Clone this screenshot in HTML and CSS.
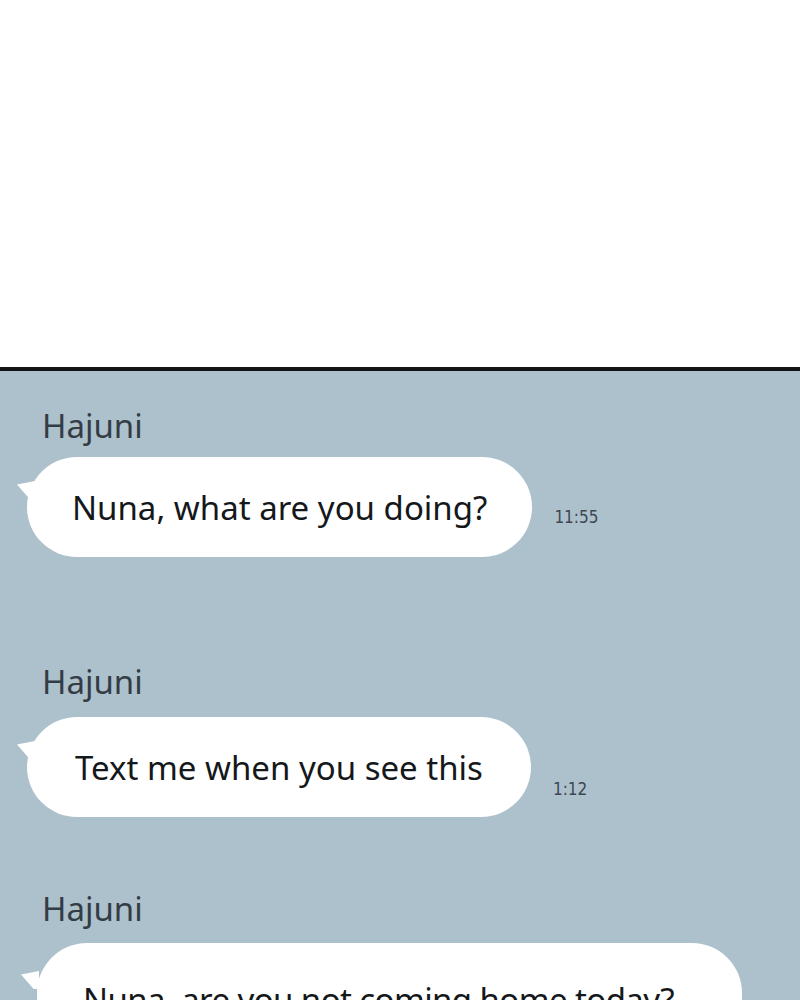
FILE: index.html
```html
<!DOCTYPE html>
<html lang="en">
<head>
    <meta charset="UTF-8">
    <meta name="viewport" content="width=device-width, initial-scale=1.0">
    <title>Chat</title>
    <link rel="stylesheet" href="styles.css">
</head>
<body>
    <div class="blank"></div>

    <div class="chat">
        <!-- first message -->
        <div class="message first">
            <div class="sender">Hajuni</div>
            <div class="row">
                <div class="bubble">Nuna, what are you doing?</div>
                <span class="time low">11:55</span>
            </div>
        </div>

        <!-- second message -->
        <div class="message second">
            <div class="sender">Hajuni</div>
            <div class="row">
                <div class="bubble wide-pad">Text me when you see this</div>
                <span class="time">1:12</span>
            </div>
        </div>

        <!-- third message -->
        <div class="message third">
            <div class="sender">Hajuni</div>
            <div class="row">
                <div class="bubble long">Nuna, are you not coming home today?</div>
            </div>
        </div>
    </div>
</body>
</html>
```

FILE: styles.css
```css
body {
    margin: 0;
    padding: 0;
    font-family: "Noto Sans", "Open Sans", sans-serif;
    background-color: #fff;
    overflow: hidden;
}

.blank {
    height: 367px;
    background-color: #fff;
    border-bottom: 4px solid #121416;
}

.chat {
    background-color: #adc1cc;
    height: 629px;
    padding-top: 35px;
    overflow: hidden;
}

.message.second {
    margin-top: 105px;
}

.message.third {
    margin-top: 72px;
}

.sender {
    margin-left: 42px;
    font-size: 33px;
    line-height: 40px;
    color: #333c44;
}

.row {
    display: flex;
    align-items: center;
    margin-top: 11px;
    margin-left: 27px;
}

.second .row {
    margin-top: 15px;
}

.third .row {
    margin-top: 14px;
}

.bubble {
    position: relative;
    background-color: #fff;
    border-radius: 50px;
    height: 100px;
    box-sizing: border-box;
    padding: 0 45px;
    display: flex;
    align-items: center;
    font-size: 33px;
    color: #15181b;
    white-space: nowrap;
}

.bubble.wide-pad {
    padding: 0 48px;
}

.bubble.long {
    margin-left: 10px;
    width: 705px;
    height: 110px;
    padding: 34px 46px 0;
    align-items: flex-start;
    letter-spacing: -0.6px;
}

.bubble::before {
    content: "";
    position: absolute;
    left: -10px;
    top: 24px;
    width: 18px;
    height: 18px;
    background-color: #fff;
    clip-path: polygon(0 20%, 100% 0, 100% 100%, 70% 100%);
}

.long::before {
    left: -16px;
    top: 28px;
}

.time {
    margin-left: 22px;
    margin-top: 44px;
    font-size: 17px;
    color: #3d4752;
    font-family: "DejaVu Sans Condensed", "DejaVu Sans", sans-serif;
}

.time.low {
    margin-top: 20px;
}
```
